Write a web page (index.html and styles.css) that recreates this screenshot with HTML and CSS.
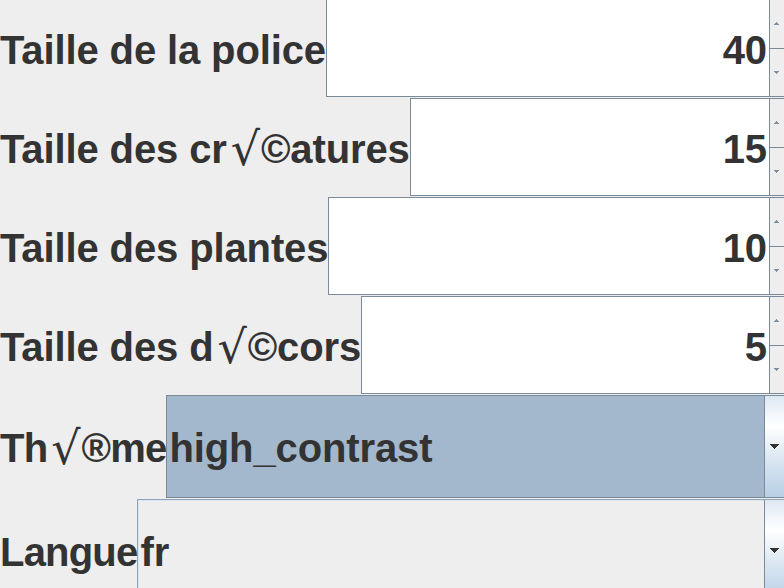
FILE: index.html
```html
<!DOCTYPE html>
<html lang="fr">
<head>
<meta charset="utf-8">
<title>Options</title>
<link rel="stylesheet" href="styles.css">
</head>
<body>
<div class="form">
  <div class="row">
    <div class="lbl">Taille de la police</div>
    <div class="spinner">
      <div class="spin-text">40</div>
      <div class="spin-btns">
        <div class="sbtn"><svg width="5" height="3" viewBox="0 0 5 3" shape-rendering="crispEdges"><path d="M2.5 0 L5 3 L0 3 Z" fill="#7f8fa0"/></svg></div>
        <div class="sbtn"><svg width="5" height="3" viewBox="0 0 5 3" shape-rendering="crispEdges"><path d="M0 0 L5 0 L2.5 3 Z" fill="#7f8fa0"/></svg></div>
      </div>
    </div>
  </div>
  <div class="row">
    <div class="lbl">Taille des cr<span class="sym">√</span>©atures</div>
    <div class="spinner">
      <div class="spin-text">15</div>
      <div class="spin-btns">
        <div class="sbtn"><svg width="5" height="3" viewBox="0 0 5 3" shape-rendering="crispEdges"><path d="M2.5 0 L5 3 L0 3 Z" fill="#7f8fa0"/></svg></div>
        <div class="sbtn"><svg width="5" height="3" viewBox="0 0 5 3" shape-rendering="crispEdges"><path d="M0 0 L5 0 L2.5 3 Z" fill="#7f8fa0"/></svg></div>
      </div>
    </div>
  </div>
  <div class="row">
    <div class="lbl">Taille des plantes</div>
    <div class="spinner">
      <div class="spin-text">10</div>
      <div class="spin-btns">
        <div class="sbtn"><svg width="5" height="3" viewBox="0 0 5 3" shape-rendering="crispEdges"><path d="M2.5 0 L5 3 L0 3 Z" fill="#7f8fa0"/></svg></div>
        <div class="sbtn"><svg width="5" height="3" viewBox="0 0 5 3" shape-rendering="crispEdges"><path d="M0 0 L5 0 L2.5 3 Z" fill="#7f8fa0"/></svg></div>
      </div>
    </div>
  </div>
  <div class="row">
    <div class="lbl">Taille des d<span class="sym">√</span>©cors</div>
    <div class="spinner">
      <div class="spin-text">5</div>
      <div class="spin-btns">
        <div class="sbtn"><svg width="5" height="3" viewBox="0 0 5 3" shape-rendering="crispEdges"><path d="M2.5 0 L5 3 L0 3 Z" fill="#7f8fa0"/></svg></div>
        <div class="sbtn"><svg width="5" height="3" viewBox="0 0 5 3" shape-rendering="crispEdges"><path d="M0 0 L5 0 L2.5 3 Z" fill="#7f8fa0"/></svg></div>
      </div>
    </div>
  </div>
  <div class="row">
    <div class="lbl lbl-narrow">Th<span class="sym">√</span>®me</div>
    <div class="combo combo-selected">
      <div class="combo-text">high_contrast</div>
      <div class="combo-btn"><svg width="9" height="5" viewBox="0 0 9 5" shape-rendering="crispEdges"><path d="M0 0 L9 0 L4.5 5 Z" fill="#333333"/></svg></div>
    </div>
  </div>
  <div class="row">
    <div class="lbl lbl-narrow">Langue</div>
    <div class="combo combo-plain">
      <div class="combo-text">fr</div>
      <div class="combo-btn"><svg width="9" height="5" viewBox="0 0 9 5" shape-rendering="crispEdges"><path d="M0 0 L9 0 L4.5 5 Z" fill="#333333"/></svg></div>
    </div>
  </div>
</div>
</body>
</html>
```
FILE: styles.css
```css
html, body {
  margin: 0;
  padding: 0;
  background: #eeeeee;
  overflow: hidden;
}

body {
  width: 784px;
  height: 588px;
  font-family: "Liberation Sans", Arial, sans-serif;
  font-weight: 700;
  font-size: 40px;
  color: #333333;
}

.form {
  width: 787px;
  margin-top: -1px;
  display: flex;
  flex-direction: column;
}

.row {
  display: flex;
  align-items: stretch;
  margin-bottom: 1px;
}

.lbl {
  flex: none;
  display: flex;
  align-items: center;
  white-space: nowrap;
  letter-spacing: -0.12px;
  line-height: 46px;
  padding-top: 3px;
}

.lbl-narrow {
  letter-spacing: -0.8px;
}

.sym {
  font-family: "DejaVu Sans", sans-serif;
  font-weight: 400;
  font-size: 46px;
  line-height: 46px;
  letter-spacing: 0;
  padding: 0 1px 0 4px;
}

.spinner {
  flex: 1;
  height: 98px;
  box-sizing: border-box;
  border: 1px solid #7a8a99;
  display: flex;
  background: #ffffff;
}

.spin-text {
  flex: 1;
  display: flex;
  align-items: center;
  justify-content: flex-end;
  padding: 3px 2px 0 0;
  line-height: 46px;
  letter-spacing: -0.12px;
  border-right: 1px solid #7a8a99;
}

.spin-btns {
  width: 16px;
  display: flex;
  flex-direction: column;
  background: #eeeeee;
}

.sbtn {
  flex: 1;
  display: flex;
  align-items: center;
  justify-content: flex-start;
  padding-left: 4px;
}

.sbtn + .sbtn {
  border-top: 1px solid #7a8a99;
}

.combo {
  flex: 1;
  height: 103px;
  box-sizing: border-box;
  border: 1px solid #7a8a99;
  display: flex;
}

.combo-selected {
  background: #a3b8cc;
}

.combo-plain {
  background: #eeeeee;
  border-color: #8fa3b7;
  box-shadow: inset 1px 1px 0 #dbe6f1;
}

.combo-text {
  flex: 1;
  display: flex;
  align-items: center;
  padding: 3px 0 0 2px;
  line-height: 46px;
  letter-spacing: -0.12px;
}

.combo-btn {
  width: 22px;
  box-sizing: border-box;
  border-left: 1px solid #7a8a99;
  display: flex;
  align-items: center;
  padding-left: 5px;
  background: linear-gradient(to bottom, #dde8f3 0%, #ffffff 30%, #dde8f3 60%, #b8cfe5 100%);
}
```
